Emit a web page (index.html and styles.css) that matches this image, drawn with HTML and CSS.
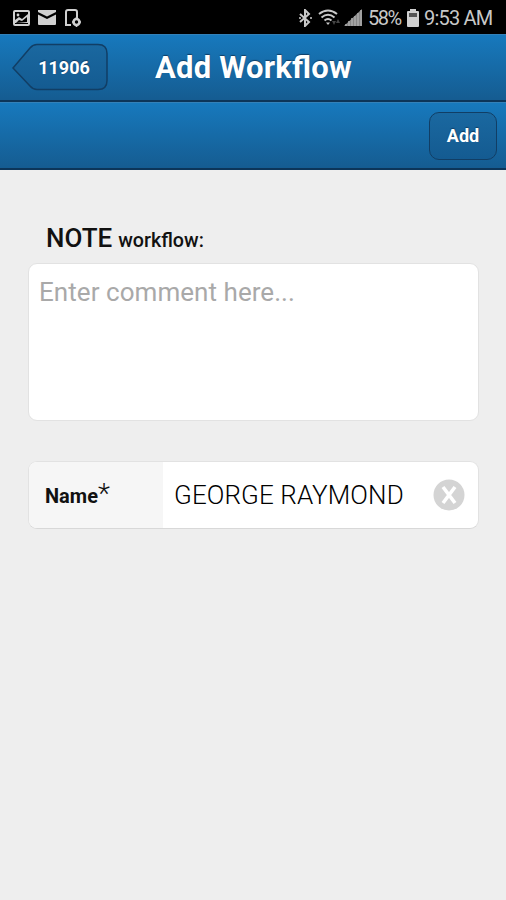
FILE: index.html
```html
<!DOCTYPE html>
<html lang="en">
<head>
    <meta charset="UTF-8">
    <meta name="viewport" content="width=device-width, initial-scale=1.0">
    <title>Add Workflow</title>
    <link rel="stylesheet" href="styles.css">
</head>
<body>
    <div class="status-bar">
        <div class="status-left">
            <svg width="17" height="16" viewBox="0 0 17 16"><rect x="1" y="1" width="15" height="14" rx="1" fill="none" stroke="#d0d0d0" stroke-width="2"/><circle cx="5" cy="5" r="1.4" fill="#d0d0d0"/><path d="M2 10l4-3 3 2 6-5v9H2z" fill="#d0d0d0"/><path d="M3 13l3-3 3 1 5-4v5z" fill="#000"/></svg>
            <svg width="18" height="15" viewBox="0 0 18 15"><path d="M0 0h18v2l-4 2-5 2.500-5-2.500L0 2zM0 4.500l4 2L9 9l5-2.500 4-2V14q0 1-1 1H1q-1 0-1-1z" fill="#d0d0d0"/></svg>
            <svg width="17" height="18" viewBox="0 0 17 18"><path d="M7 16H2V3q0-2 2-2h7q2 0 2 2v6" fill="none" stroke="#d0d0d0" stroke-width="2"/><circle cx="12.500" cy="13" r="3" fill="none" stroke="#d0d0d0" stroke-width="2.6"/><path d="M12.500 8v2M12.500 16v2M8 13h2M15 13h2" stroke="#d0d0d0" stroke-width="1.600"/></svg>
        </div>
        <div class="status-right">
            <svg class="bluetooth" width="13" height="18" viewBox="0 0 13 18"><path d="M1 5l9 8-4 4V1l4 4-9 8" fill="none" stroke="#c8c8c8" stroke-width="2"/><path d="M0 9h2M11 9h2" stroke="#999" stroke-width="2"/></svg>
            <svg class="wifi" width="24" height="18" viewBox="0 0 24 18"><path d="M1 5q9-7 18 0M3.500 8.500q6.500-5.500 13 0M6.500 11.500q3.500-3 7 0" fill="none" stroke="#c8c8c8" stroke-width="2"/><path d="M8 13.500h4L10 16z" fill="#c8c8c8"/><path d="M14 12h4l-2 4zM18 14l2-4 2 4z" fill="#444"/></svg>
            <svg class="signal" width="18" height="17" viewBox="0 0 18 17"><path d="M0 17L18 0v17z" fill="#858585"/><path d="M2 15v2M5 12v5M8 9v8M11 7v10M14 4v13M17 1v16" stroke="#aaa" stroke-width="1.500"/></svg>
            <span class="percent">58%</span>
            <svg class="battery" width="12" height="18" viewBox="0 0 12 18"><path d="M3 0h6v2h2q1 0 1 1v14q0 1-1 1H1q-1 0-1-1V3q0-1 1-1h2z" fill="#d0d0d0"/><path d="M2 4h8v4H2z" fill="#555"/></svg>
            <span class="clock">9:53 AM</span>
        </div>
    </div>

    <div class="header">
        <button class="back-btn">
            <svg class="back-shape" width="98" height="50" viewBox="0 0 98 50">
                <defs>
                    <linearGradient id="backFill" x1="0" y1="0" x2="0" y2="1">
                        <stop offset="0" stop-color="#1a68a0"/>
                        <stop offset="1" stop-color="#145b91"/>
                    </linearGradient>
                </defs>
                <path d="M2 25L19 5q3-3.500 7-3.500h61q9 0 9 9v27q0 9-9 9H26q-4 0-7-3.500z" fill="url(#backFill)" stroke="#113e65" stroke-width="1.500"/>
            </svg>
            <span class="back-label">11906</span>
        </button>
        <h1>Add Workflow</h1>
    </div>

    <div class="toolbar">
        <button class="add-btn">Add</button>
    </div>

    <div class="content">
        <label class="note-label" for="comment"><span class="note-type">NOTE</span> workflow:</label>
        <textarea id="comment" placeholder="Enter comment here..."></textarea>

        <div class="field">
            <label for="name">Name<span class="required">*</span></label>
            <input type="text" id="name" value="GEORGE RAYMOND">
            <button class="clear-btn" aria-label="Clear">
                <svg width="32" height="32" viewBox="0 0 32 32"><circle cx="16" cy="16" r="15.500" fill="#d4d4d4"/><path d="M10 8l12 16M22 8L10 24" stroke="#fff" stroke-width="3.600"/></svg>
            </button>
        </div>
    </div>
</body>
</html>
```
FILE: styles.css
```css
* {
    box-sizing: border-box;
}
body {
    font-family: Roboto, sans-serif;
    background-color: #eee;
    margin: 0;
    min-height: 900px;
    color: #111;
}
button {
    border: none;
    background: none;
    padding: 0;
    font-family: inherit;
    font-weight: bold;
    color: #fff;
    cursor: pointer;
}
svg {
    display: block;
    flex: none;
}
.status-bar {
    display: flex;
    justify-content: space-between;
    height: 34px;
    padding: 0 13px;
    background-color: #000;
    color: #c8c8c8;
    font-size: 20px;
    line-height: 36px;
    white-space: nowrap;
}
.status-left,
.status-right {
    display: flex;
    align-items: center;
    height: 35px;
}
.status-left {
    gap: 8px;
}
.wifi {
    margin-left: 6px;
}
.signal {
    margin-left: 2px;
}
.percent {
    width: 33px;
    margin-left: 6px;
    letter-spacing: -1.5px;
}
.battery {
    margin-left: 6px;
}
.clock {
    width: 69px;
    margin-left: 5px;
    letter-spacing: -0.8px;
}
.header,
.toolbar {
    display: flex;
    align-items: center;
    height: 68px;
    background: linear-gradient(#1779bd, #155c91);
    border-top: 1px solid #3381b9;
    border-bottom: 2px solid #0c3559;
}
.header {
    padding-left: 11px;
}
.back-btn {
    display: grid;
    align-items: center;
    width: 98px;
    height: 50px;
}
.back-shape,
.back-label {
    grid-area: 1 / 1;
}
.back-label {
    padding-left: 8px;
    font-size: 18px;
    text-shadow: 0 -1px 1px #113e65;
}
h1 {
    margin: 0 0 0 46px;
    font-size: 31px;
    line-height: 40px;
    letter-spacing: 0.2px;
    /* letter-spacing turns the fl ligature off by default */
    font-feature-settings: "liga" 1;
    color: #fff;
    text-shadow: 0 -1px 1px #113e65;
    white-space: nowrap;
}
.toolbar {
    justify-content: flex-end;
    padding-right: 9px;
}
.add-btn {
    width: 68px;
    height: 48px;
    border: 1.5px solid #113e65;
    border-radius: 10px;
    background: linear-gradient(#1a68a0, #145b91);
    font-size: 18px;
    text-shadow: 0 -1px 1px #113e65;
}
.content {
    padding: 49px 27px 0 28px;
}
.note-label {
    display: block;
    height: 44px;
    padding-left: 18px;
    font-size: 19.7px;
    font-weight: 500;
    line-height: 38px;
    word-spacing: 1px;
}
.note-type {
    font-size: 26px;
}
textarea {
    display: block;
    width: 100%;
    height: 158px;
    padding: 10px;
    border: 1px solid #e2e2e2;
    border-radius: 9px;
    background-color: #fff;
    font-family: inherit;
    font-size: 26px;
    line-height: 36px;
    letter-spacing: 0.05px;
    resize: none;
    outline: none;
}
textarea::placeholder {
    color: #a9a9a9;
}
.field {
    display: flex;
    align-items: center;
    height: 68px;
    margin-top: 40px;
    padding-right: 13px;
    border: 1px solid #e2e2e2;
    border-bottom-color: #d8d8d8;
    border-radius: 9px;
    background-color: #fff;
    overflow: hidden;
}
.field label {
    width: 134px;
    height: 100%;
    padding-left: 16px;
    background-color: #f6f6f6;
    font-size: 20px;
    font-weight: bold;
    line-height: 68px;
}
.required {
    font-size: 28px;
    font-weight: 300;
    line-height: 1;
}
.field input {
    flex: 1;
    min-width: 0;
    padding: 0 0 0 11px;
    border: none;
    background: none;
    font-family: inherit;
    font-size: 26px;
    font-weight: 300;
    letter-spacing: 0.1px;
    color: #000;
    outline: none;
}
```
